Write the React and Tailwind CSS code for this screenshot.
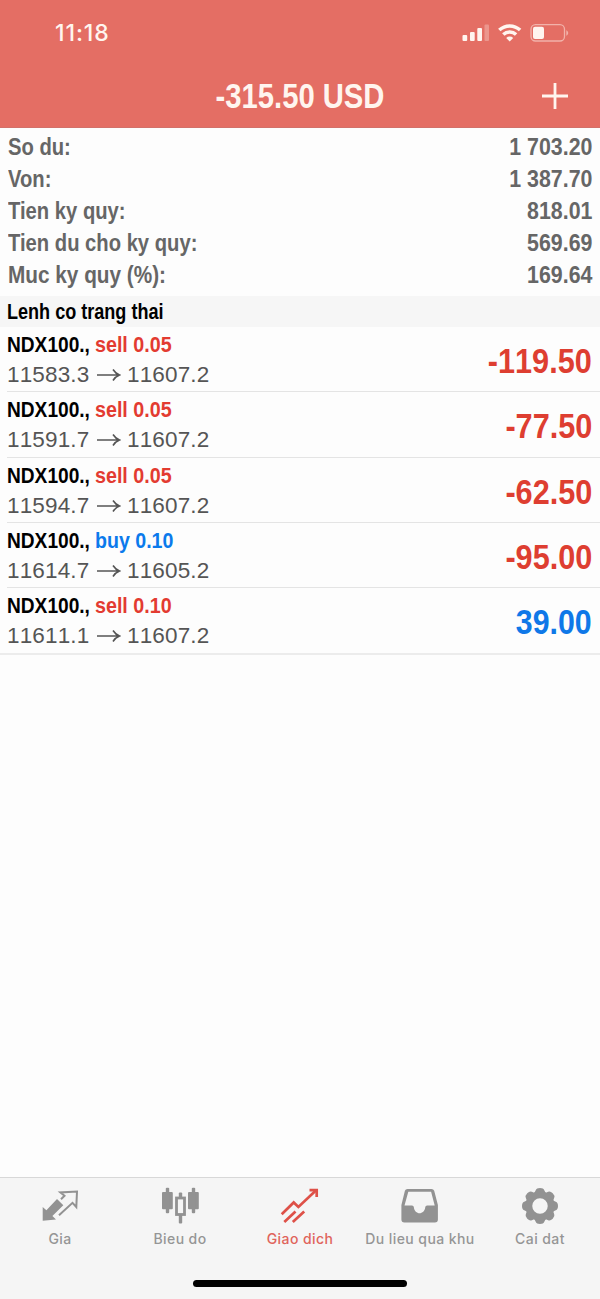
import React from "react";

const summary = [
  ["So du:", "1 703.20"],
  ["Von:", "1 387.70"],
  ["Tien ky quy:", "818.01"],
  ["Tien du cho ky quy:", "569.69"],
  ["Muc ky quy (%):", "169.64"],
];

const orders = [
  { side: "sell 0.05", open: "11583.3", now: "11607.2", profit: "-119.50" },
  { side: "sell 0.05", open: "11591.7", now: "11607.2", profit: "-77.50" },
  { side: "sell 0.05", open: "11594.7", now: "11607.2", profit: "-62.50" },
  { side: "buy 0.10", open: "11614.7", now: "11605.2", profit: "-95.00" },
  { side: "sell 0.10", open: "11611.1", now: "11607.2", profit: "39.00" },
];

function StatusIcons() {
  return (
    <svg width="108" height="22" viewBox="462 22 108 22" fill="#fff5ef">
      <rect x="462.500" y="35" width="4.700" height="6" rx="1" />
      <rect x="470" y="32" width="4.700" height="9" rx="1" />
      <rect x="477.300" y="28" width="4.700" height="13" rx="1" />
      <rect x="484.500" y="24.500" width="4.500" height="16.500" rx="1" opacity=".3" />
      <g fill="none" stroke="#fff5ef" strokeWidth="3.500">
        <path d="M499.300 30.100a15 15 0 0 1 20.800 0" />
        <path d="M503.300 34.500a9.300 9.300 0 0 1 12.800 0" />
      </g>
      <path d="M509.700 41.500l-3.500-3.600a5 5 0 0 1 7 0z" />
      <rect x="531" y="24.700" width="33.500" height="16.300" rx="4.500" fill="none" stroke="#fff5ef" strokeWidth="1.300" opacity=".5" />
      <rect x="533" y="26.700" width="11" height="12.300" rx="2" />
      <path d="M566.300 30.300c2.500 1 2.500 4.500 0 5.500z" opacity=".5" />
    </svg>
  );
}

function QuotesIcon() {
  return (
    <svg width="40" height="40" viewBox="40 1186 40 40">
      <path d="M42.700 1220.700V1207l3.700 3.300 10.600-11.300 6.300 6.300-10.900 10.700 3.600 3.600z" fill="#929292" />
      <path d="M61 1199.300l3.500-3.500-4.200-3.400 16.700-.9-.7 15.500-3.800-4.200-13.500 12.500" fill="none" stroke="#929292" strokeWidth="2" />
    </svg>
  );
}

function ChartIcon() {
  return (
    <svg width="40" height="40" viewBox="160 1186 40 40" fill="#929292">
      <rect x="162" y="1192" width="10.800" height="17.300" rx="1" />
      <rect x="165.800" y="1187.700" width="3.400" height="25.600" rx="1" />
      <rect x="188" y="1192" width="10.800" height="17.300" rx="1" />
      <rect x="191.800" y="1187.700" width="3.400" height="25.600" rx="1" />
      <rect x="178.800" y="1192.500" width="3.400" height="5" rx="1" />
      <rect x="178.800" y="1214" width="3.400" height="9.500" rx="1" />
      <rect x="176.500" y="1198" width="8" height="16.500" fill="#f5f5f5" stroke="#929292" strokeWidth="2.800" />
    </svg>
  );
}

function TradeIcon() {
  return (
    <svg width="40" height="40" viewBox="280 1186 40 40" fill="none" stroke="#de5148" strokeWidth="2.700">
      <path d="M281.700 1214.200l12-11.700 4.700 4.500 18-17" />
      <path d="M309.500 1190.100h7.200v7" />
      <path d="M284.300 1222l11.200-10.500M292.800 1222l11.400-10.500" />
    </svg>
  );
}

function HistoryIcon() {
  return (
    <svg width="40" height="40" viewBox="400 1186 40 40">
      <path
        fill="#929292"
        fillRule="evenodd"
        d="M407.500 1189h24q2 0 2.700 1.800l3.700 14.200V1219.500q0 3-3 3h-30.500q-3 0-3-3V1205l3.500-14.200q.6-1.800 2.600-1.800zM408.300 1191.800l-3.800 13.700h7.500q1.600 0 1.800 1.500c.8 8.300 10.700 8.300 11.500 0q.2-1.500 1.800-1.500h7.600l-3.600-13.700z"
      />
    </svg>
  );
}

function GearIcon() {
  const teeth = [0, 45, 90, 135, 180, 225, 270, 315];
  return (
    <svg width="40" height="40" viewBox="-20 -20 40 40" fill="#929292">
      {teeth.map((a) => (
        <path key={a} d="M-7-12Q-5-13.500-4.300-15.800Q-3.500-18 0-18Q3.500-18 4.300-15.800Q5-13.500 7-12Z" transform={"rotate(" + a + ")"} />
      ))}
      <circle r="11" fill="none" stroke="#929292" strokeWidth="6.500" />
    </svg>
  );
}

const tabs = [
  ["Gia", QuotesIcon],
  ["Bieu do", ChartIcon],
  ["Giao dich", TradeIcon],
  ["Du lieu qua khu", HistoryIcon],
  ["Cai dat", GearIcon],
];

export default function App() {
  return (
    <div className="flex h-[1299px] w-[600px] flex-col overflow-hidden bg-[#fdfdfd] font-['Liberation_Sans',Arial,sans-serif]">
      <header className="flex h-32 shrink-0 flex-col border-b border-[#d2716a] bg-[#e46e64] text-[#fff5ef]">
        <div className="flex h-16 items-start justify-between pl-[55px] pr-[30px] pt-[22px]">
          <span className="font-['Inter',sans-serif] text-[23px] font-medium leading-[23px] tracking-[0.9px]">11:18</span>
          <StatusIcons />
        </div>
        <div className="grid h-16 grid-cols-[80px_1fr_80px] items-center">
          <span />
          <h1 className="origin-center scale-x-[.835] text-center text-[35px] font-bold leading-[66px]">-315.50 USD</h1>
          <svg className="ml-[21px]" width="28" height="28" viewBox="0 0 28 28" stroke="#fff5ef" strokeWidth="2.800">
            <path d="M14 1v26M1 14h26" />
          </svg>
        </div>
      </header>

      <section className="flex h-[168px] shrink-0 flex-col px-[7.500px] pt-[3px] text-[24px] font-bold leading-8 text-[#666]">
        {summary.map(([label, value]) => (
          <div key={label} className="flex h-8 justify-between whitespace-nowrap">
            <span className={label.includes("%") ? "origin-left scale-x-[.865]" : "origin-left scale-x-[.842]"}>{label}</span>
            <span className="origin-right scale-x-[.89]">{value}</span>
          </div>
        ))}
      </section>

      <h2 className="h-[31px] shrink-0 bg-[#f6f6f6] px-[7px] text-[21.5px] font-bold leading-8 text-black">
        <span className="inline-block origin-left scale-x-[.84] whitespace-nowrap">Lenh co trang thai</span>
      </h2>

      <main className="flex h-[328px] shrink-0 flex-col border-b-2 border-[#ececec]">
        {orders.map((o, i) => (
          <article key={i} className="ml-[7px] flex h-[65.3px] shrink-0 justify-between border-b border-[#e4e4e4] pr-[8px] last:border-0">
            <div className="whitespace-nowrap">
              <div className="flex h-[33px] text-[22.5px] font-bold leading-[35px]">
                <span className="w-[88px] origin-left scale-x-[.85] text-black">NDX100.,</span>
                <span className={o.side.startsWith("buy") ? "origin-left scale-x-[.87] text-[#0b7aec]" : "origin-left scale-x-[.875] text-[#e33b31]"}>
                  {o.side}
                </span>
              </div>
              <div className="flex h-[30px] items-center text-[22.5px] leading-[30px] tracking-[.15px] text-[#555] [font-kerning:none]">
                <span className="w-[90px]">{o.open}</span>
                <svg className="mr-[6px]" width="24" height="14" viewBox="0 0 24 14" fill="none" stroke="#555" strokeWidth="1.600">
                  <path d="M0 7h22M16 1.500Q18.500 5.500 22.500 7Q18.500 8.500 16 12.500" />
                </svg>
                <span>{o.now}</span>
              </div>
            </div>
            <div className={o.profit.startsWith("-") ? "origin-right scale-x-[.875] text-[35px] font-bold leading-[68px] text-[#de3e31] [font-kerning:none]" : "origin-right scale-x-[.865] text-[35px] font-bold leading-[68px] text-[#0f78e8] [font-kerning:none]"}>
              {o.profit}
            </div>
          </article>
        ))}
      </main>

      <div className="flex-1" />

      <footer className="flex h-[122px] shrink-0 flex-col items-center border-t border-[#d8d8d8] bg-[#f5f5f5]">
        <nav className="grid h-[102px] w-full grid-cols-5 pt-2">
          {tabs.map(([label, Icon]) => (
            <div key={label} className="flex flex-col items-center">
              <Icon />
              <span className={label === "Giao dich" ? "mt-[3px] whitespace-nowrap font-['Inter',sans-serif] text-[14px] font-medium leading-5 tracking-[.42px] text-[#e0645c]" : "mt-[3px] whitespace-nowrap font-['Inter',sans-serif] text-[14px] font-medium leading-5 tracking-[.42px] text-[#959595]"}>
                {label}
              </span>
            </div>
          ))}
        </nav>
        <div className="h-[7px] w-[214px] rounded-full bg-black" />
      </footer>
    </div>
  );
}
